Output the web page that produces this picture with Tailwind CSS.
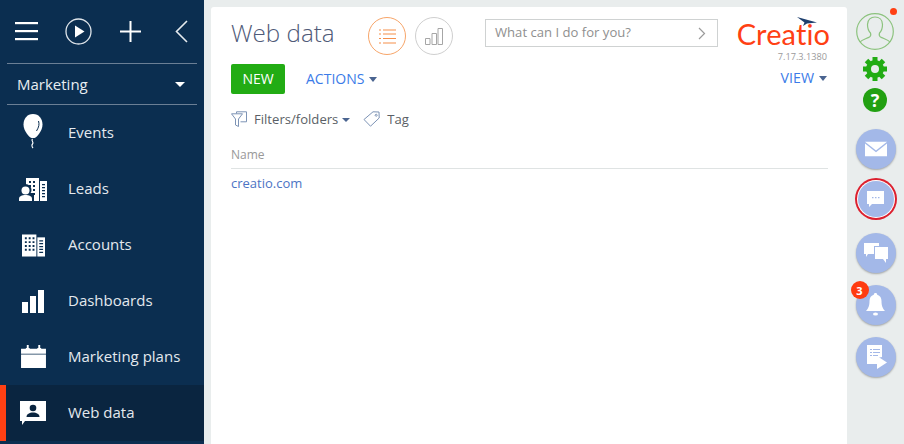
<!DOCTYPE html>
<html>
<head>
<meta charset="utf-8">
<script src="https://cdn.jsdelivr.net/npm/@tailwindcss/browser@4"></script>
</head>
<body class="m-0 overflow-hidden">
<div class="flex w-[904px] h-[444px] bg-[#e9eded] font-['Open_Sans',sans-serif] overflow-hidden">

  <!-- Sidebar -->
  <aside class="w-[204px] h-full shrink-0 bg-[#0b2e50] flex flex-col">
    <div class="h-[64px] mx-[7px] flex items-center border-b border-[#6b7f95] relative">
      <div class="flex items-center -mt-[1px]">
        <svg class="ml-[8px]" width="23" height="19" viewBox="0 0 23 19" fill="#fff"><rect y="0" width="23" height="2.2"/><rect y="8" width="23" height="2.2"/><rect y="16" width="23" height="2.2"/></svg>
        <svg class="ml-[27px]" width="27" height="27" viewBox="0 0 27 27" fill="none"><circle cx="13.5" cy="13.5" r="12.5" stroke="#dfe5ea" stroke-width="1.3"/><path d="M10 7.5v12l9.5-6z" fill="#fff"/></svg>
        <svg class="ml-[28px]" width="21" height="21" viewBox="0 0 21 21" fill="#fff"><rect x="9.5" y="0" width="2" height="21"/><rect x="0" y="9.5" width="21" height="2"/></svg>
        <svg class="ml-[34px]" width="13" height="23" viewBox="0 0 13 23" fill="none"><path d="M12 1L1.5 11.5 12 22" stroke="#e6ebef" stroke-width="1.6"/></svg>
      </div>
    </div>
    <div class="h-[41px] mx-[7px] px-[10px] flex items-center justify-between border-b border-[#6b7f95] text-[15px] text-[#e8edf1]">
      <span>Marketing</span>
      <span class="mr-[2px] w-0 h-0 border-x-[5.500px] border-x-transparent border-t-[5px] border-t-white"></span>
    </div>
    <nav class="flex flex-col text-[15px] text-[#e4e9ee]">
      <a class="h-[56px] flex items-center">
        <span class="w-[68px] flex justify-center">
          <svg class="mr-[3px] -mt-[2px]" width="22" height="36" viewBox="0 0 22 36" fill="none"><path d="M11 0C5 0 1.500 5 1.500 10.500 1.500 17 7 23 9.500 24h3c2.500-1 8-7 8-13.500C20.500 5 17 0 11 0z" fill="#fff"/><path d="M16.500 7c1 3 .5 6-2 10" stroke="#0b2e50" stroke-width="1"/><path d="M10.500 25c-2 2 2 3 0 5-1 1-.5 3 .5 4" stroke="#fff" stroke-width="1.200"/></svg>
        </span>
        <span class="pb-[2px]">Events</span>
      </a>
      <a class="h-[56px] flex items-center">
        <span class="w-[68px] flex justify-center">
          <svg class="mr-[2px]" width="28" height="23" viewBox="0 0 28 23" fill="#fff"><path d="M7 0h13v23H7z"/><path d="M21 3h7v20h-7z"/><g fill="#0b2e50"><path d="M10 3h2v2h-2zM14 3h2v2h-2zM10 7h2v2h-2zM14 7h2v2h-2zM14 11h2v2h-2zM14 15h2v2h-2zM23 6h3v1.200h-3zM23 9h3v1.200h-3zM23 12h3v1.200h-3zM23 15h3v1.200h-3zM23 18h3v1.200h-3z"/><circle cx="6.500" cy="12" r="6"/><path d="M0 15h15v8H0z"/></g><circle cx="6.500" cy="12.500" r="4"/><path d="M0 23v-2c0-3 3-4 6.500-4s6.500 1 6.500 4v2z"/></svg>
        </span>
        <span class="pb-[2px]">Leads</span>
      </a>
      <a class="h-[56px] flex items-center">
        <span class="w-[68px] flex justify-center">
          <svg class="mr-[1px]" width="23" height="23" viewBox="0 0 24 23" fill="#fff"><path d="M0 0h15v23H0z"/><path d="M16 3h8v20h-8z"/><g fill="#0b2e50"><path d="M3 3h2v2H3zM7 3h2v2H7zM11 3h2v2h-2zM3 7h2v2H3zM7 7h2v2H7zM11 7h2v2h-2zM3 11h2v2H3zM7 11h2v2H7zM11 11h2v2h-2zM3 15h2v2H3zM7 15h2v2H7zM11 15h2v2h-2zM18 6h4v1.200h-4zM18 9h4v1.200h-4zM18 12h4v1.200h-4zM18 15h4v1.200h-4zM18 18h4v1.200h-4z"/></g></svg>
        </span>
        <span class="pb-[2px]">Accounts</span>
      </a>
      <a class="h-[56px] flex items-center">
        <span class="w-[68px] flex justify-center">
          <svg class="mr-[2px]" width="22" height="23" viewBox="0 0 22 23" fill="#fff"><path d="M0 12h6v11H0zM8 6h6v17H8zM16 0h6v23h-6z"/></svg>
        </span>
        <span class="pb-[2px]">Dashboards</span>
      </a>
      <a class="h-[56px] flex items-center">
        <span class="w-[68px] flex justify-center">
          <svg class="mr-[1px] -mt-[2px]" width="25" height="23" viewBox="0 0 26 24" fill="#fff"><path d="M0 4h5v-1h1V0h2v3h1v1h8V3h1V0h2v3h1v1h5v5H0zM0 10h26v14H0z"/></svg>
        </span>
        <span class="pb-[2px]">Marketing plans</span>
      </a>
      <a class="h-[56px] flex items-center bg-[#0a2540] border-l-[6px] border-[#ff4013]">
        <span class="w-[62px] flex justify-center">
          <svg class="mr-[8px] -mt-[1px]" width="26" height="24" viewBox="0 0 26 24" fill="#fff"><path d="M0 0h26v20H5l-3 4v-4H0z"/><circle cx="13" cy="7" r="3.300" fill="#0a2540"/><path d="M6.500 16c0-3 3-4.500 6.500-4.500s6.500 1.500 6.500 4.500z" fill="#0a2540"/></svg>
        </span>
        <span class="pb-[2px]">Web data</span>
      </a>
    </nav>
  </aside>

  <!-- Main panel -->
  <main class="ml-[7px] mt-[7px] w-[636px] h-[460px] shrink-0 bg-white rounded-t-[3px] pl-[20px] pr-[19px] flex flex-col">
    <!-- Header row -->
    <div class="h-[57px] flex relative">
      <h1 class="text-[24.200px] leading-none font-light text-[#4f5a78] mt-[14px] w-[137px]">Web data</h1>
      <div class="mt-[10px] w-[38px] h-[38px] rounded-full border border-[#f7a569] flex items-center justify-center">
        <svg width="17" height="15" viewBox="0 0 17 15" fill="none" stroke="#f58f4b" stroke-width="1.200"><path d="M0 1h2M4 1h13M0 5h2M4 5h13M0 9.500h2M4 9.500h13M0 14h2M4 14h13"/></svg>
      </div>
      <div class="ml-[9px] mt-[10px] w-[38px] h-[38px] rounded-full border border-[#cfcfcf] flex items-center justify-center">
        <svg width="18" height="17" viewBox="0 0 18 17" fill="none" stroke="#a6a6a6" stroke-width="1"><path d="M.5 10.500h4.500v6H.5zM7 5.500h4.500v11H7zM13 .5h4.500v16H13z"/></svg>
      </div>
      <div class="ml-[32px] mt-[12px] w-[233px] h-[28px] border border-[#cfd2d2] flex items-center justify-between pl-[9px] pr-[11px] text-[13.100px] text-[#8f8f8f]">
        <span>What can I do for you?</span>
        <svg width="8" height="13" viewBox="0 0 8 13" fill="none" stroke="#9b9b9b" stroke-width="1.200"><path d="M1 1l5.500 5.500L1 12"/></svg>
      </div>
      <div class="ml-auto flex flex-col items-end">
        <div class="relative mt-[9px] mr-[-2px]">
          <span class="block font-['Lato',sans-serif] text-[29px] leading-[36px] tracking-[0.1px] text-[#ff4013]">Creatio</span>
          <svg class="absolute top-[1px] right-[13px]" width="20" height="9" viewBox="0 0 20 9" fill="#1d3f6e"><path d="M0 0l20 5.500L10 6.500 6 9l1.500-3.500z"/></svg>
        </div>
        <span class="text-[9.200px] leading-[12px] text-[#9b9b9b] -mt-[1px] mr-[1px]">7.17.3.1380</span>
      </div>
    </div>
    <!-- Actions -->
    <div class="h-[30px] flex items-center justify-between">
      <div class="flex items-center">
        <button class="w-[54px] h-[30px] pb-[2px] bg-[#22ac14] rounded-[2px] text-white text-[14px] font-medium">NEW</button>
        <span class="ml-[21px] pb-[2px] text-[14px] text-[#3b7be8]">ACTIONS</span>
        <span class="ml-[5px] w-0 h-0 border-x-[4.500px] border-x-transparent border-t-[5px] border-t-[#4a6490]"></span>
      </div>
      <div class="flex items-center mr-[1px]">
        <span class="pb-[2px] text-[14.200px] text-[#3b7be8]">VIEW</span>
        <span class="ml-[5px] w-0 h-0 border-x-[4.500px] border-x-transparent border-t-[5px] border-t-[#4a6490]"></span>
      </div>
    </div>
    <!-- Filters -->
    <div class="mt-[14px] h-[22px] flex items-center text-[13.100px] text-[#5a5f66]">
      <svg width="16" height="17" viewBox="0 0 16 17" fill="none" stroke="#7d93b5" stroke-width="1"><path d="M5.500 2.500V.8h10v10H9.500M.5 2.800h11L7.500 8v7.500l-3-1.500V8z"/></svg>
      <span class="ml-[7px] pt-[2px]">Filters/folders</span>
      <span class="ml-[4px] mt-[1px] w-0 h-0 border-x-[4.500px] border-x-transparent border-t-[4.500px] border-t-[#4a6490]"></span>
      <svg class="ml-[13px]" width="17" height="16" viewBox="0 0 17 16" fill="none" stroke="#7d93b5" stroke-width="1"><path d="M10 .8l6 .2.200 6-8.700 8.200L1 8.500zM12.500 3.500a1 1 0 1 1 0 1.500 1 1 0 0 1 0-1.500z"/></svg>
      <span class="ml-[7px] pt-[2px]">Tag</span>
    </div>
    <!-- Grid -->
    <div class="mt-[13px] h-[26px] border-b border-[#dfe3e3] text-[12px] leading-[24px] text-[#999]">Name</div>
    <div class="mt-[4px] text-[13px] leading-[20px] text-[#4c74c4]">creatio.com</div>
  </main>

  <!-- Right rail -->
  <div class="flex-1 flex flex-col items-center pt-[13px]">
    <div class="relative mr-[2px] w-[38px] h-[37px] shrink-0">
      <svg width="38" height="37" viewBox="0 0 38 37" fill="none" stroke="#8cc37e" stroke-width="1.200"><ellipse cx="19" cy="18.500" rx="18.300" ry="17.900"/><path d="M4 29c2-2.500 7-3.500 9.500-5 1.500-1 1.500-2.500 1-4-2-2-3-5-3-8.500C11.500 6.500 15 4 19 4s7.500 2.500 7.500 7.500c0 3.500-1 6.500-3 8.500-.5 1.500-.5 3 1 4 2.500 1.500 7.500 2.500 9.500 5"/></svg>
      <span class="absolute -top-[5px] right-[-3px] w-[7px] h-[7px] rounded-full bg-[#ff4013]"></span>
    </div>
    <svg class="mt-[7px] mr-[1px] shrink-0" width="24" height="24" viewBox="0 0 24 24"><g fill="#22ac14"><rect x="9.500" y="0" width="5" height="24"/><rect x="9.500" y="0" width="5" height="24" transform="rotate(45 12 12)"/><rect x="9.500" y="0" width="5" height="24" transform="rotate(90 12 12)"/><rect x="9.500" y="0" width="5" height="24" transform="rotate(135 12 12)"/></g><circle cx="12" cy="12" r="6.500" fill="none" stroke="#22ac14" stroke-width="5"/><circle cx="12" cy="12" r="4" fill="#e9eded"/></svg>
    <div class="mt-[7px] mr-[1px] w-[24px] h-[24px] shrink-0 rounded-full bg-[#22a012] flex items-center justify-center text-white text-[18px] font-bold leading-none">?</div>
    <div class="mt-[17px] shrink-0 w-[40px] h-[40px] rounded-full bg-[#a3b8e8] shadow-[0_1px_2px_rgba(0,0,0,.3)] flex items-center justify-center">
      <svg width="22" height="16" viewBox="0 0 24 16" fill="#fff"><path d="M0 0h24L12 9.500z"/><path d="M0 2l12 9.500L24 2v14H0z"/></svg>
    </div>
    <div class="mt-[12px] mb-[2px] shrink-0 w-[36px] h-[36px] rounded-full bg-[#a3b8e8] shadow-[0_0_0_1px_#fff,0_0_0_3px_#dc1f2e] flex items-center justify-center">
      <svg width="17" height="16" viewBox="0 0 17 16" fill="#fff"><path fill-rule="evenodd" d="M0 0h17v13H5l-3 3v-3H0zM5 6h1.500v1.300H5zM8 6h1.500v1.300H8zM11 6h1.500v1.300H11z"/></svg>
    </div>
    <div class="mt-[14px] shrink-0 w-[40px] h-[40px] rounded-full bg-[#a3b8e8] shadow-[0_1px_2px_rgba(0,0,0,.3)] flex items-center justify-center">
      <svg width="24" height="21" viewBox="0 0 24 21" fill="#fff"><path d="M0 0h15v3H10v8H4l-2 3v-3H0z"/><path d="M11 4h13v12h-2v4l-3-4h-8z"/></svg>
    </div>
    <div class="relative mt-[12px] shrink-0 w-[40px] h-[40px] rounded-full bg-[#a3b8e8] shadow-[0_1px_2px_rgba(0,0,0,.3)] flex items-center justify-center">
      <svg width="19" height="24" viewBox="0 0 19 24" fill="#fff"><path d="M9.500 0c1 0 1.700.7 1.700 1.700 3 .8 4.300 3.300 4.300 6.300 0 5 1 7 3.500 10H0c2.500-3 3.500-5 3.500-10 0-3 1.300-5.500 4.300-6.300C7.800.7 8.500 0 9.500 0z"/><ellipse cx="9.500" cy="21" rx="2.500" ry="1.600"/></svg>
      <span class="absolute -top-[4px] -left-[5px] w-[18px] h-[18px] rounded-full bg-[#ff3b10] text-white text-[11px] font-bold flex items-center justify-center leading-none">3</span>
    </div>
    <div class="mt-[12px] shrink-0 w-[40px] h-[40px] rounded-full bg-[#a3b8e8] shadow-[0_1px_2px_rgba(0,0,0,.3)] flex items-center justify-center">
      <svg class="ml-[3px]" width="20" height="24" viewBox="0 0 20 24" fill="#fff"><path fill-rule="evenodd" d="M0 0h15v12l-5 1v6H0zM3 4h2v1H3zM6 4h7v1H6zM3 7h2v1H3zM6 7h7v1H6zM3 10h2v1H3zM6 10h5v1H6z"/><path d="M10 11l10 6.500L10 24z"/></svg>
    </div>
  </div>
</div>
</body>
</html>
